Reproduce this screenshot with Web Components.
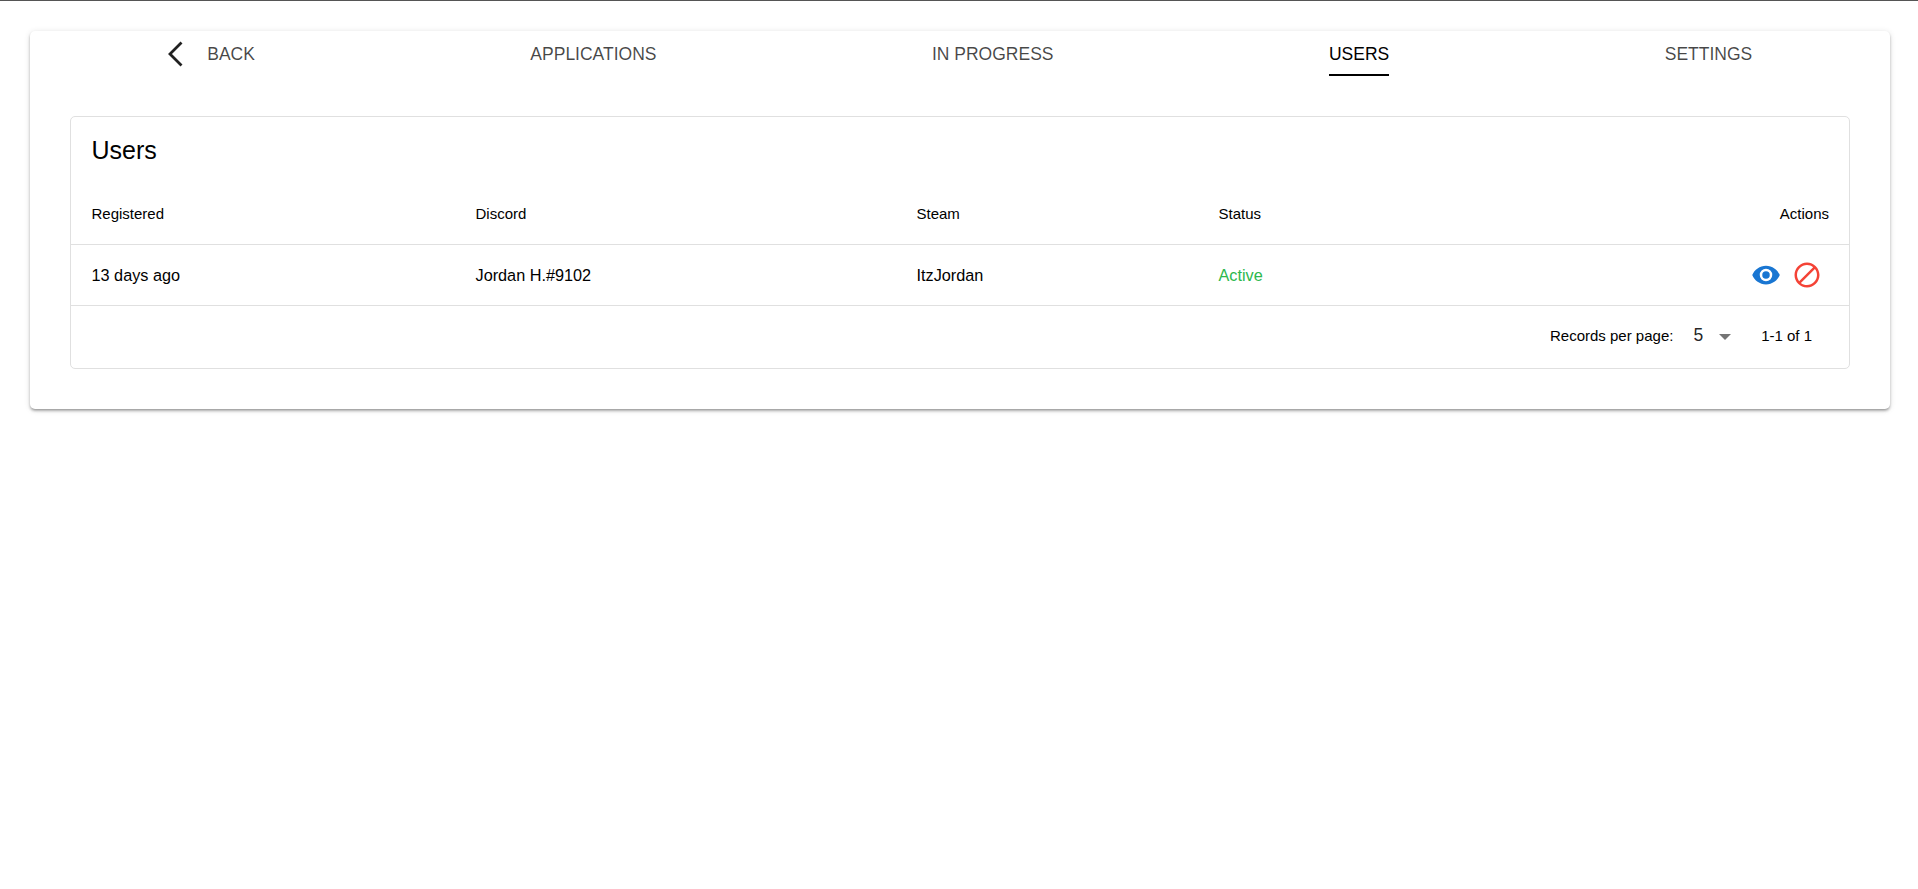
<!DOCTYPE html>
<html lang="en">
<head>
<meta charset="utf-8">
<title>Users</title>
<style>
    html, body { margin: 0; padding: 0; background: #fff; }
    body { font-family: "Liberation Sans", Arial, sans-serif; color: #000; border-top: 1px solid #555; }
</style>
</head>
<body>
<admin-page>
    <nav-tabs slot="tabs">
        <nav-tab back>BACK</nav-tab>
        <nav-tab>APPLICATIONS</nav-tab>
        <nav-tab>IN PROGRESS</nav-tab>
        <nav-tab active>USERS</nav-tab>
        <nav-tab>SETTINGS</nav-tab>
    </nav-tabs>
    <data-card title="Users">
        <table-row header>
            <span>Registered</span><span>Discord</span><span>Steam</span><span>Status</span><span class="end">Actions</span>
        </table-row>
        <table-row>
            <span>13 days ago</span><span>Jordan H.#9102</span><span>ItzJordan</span><span style="color:#2db84d">Active</span>
            <row-actions></row-actions>
        </table-row>
        <table-footer records="5" range="1-1 of 1"></table-footer>
    </data-card>
</admin-page>

<script>
class AdminPage extends HTMLElement {
    constructor() {
        super();
        this.attachShadow({ mode: 'open' });
        this.shadowRoot.innerHTML = `
            <style>
                :host { display: block; padding: 30px 28px 30px 30px; }
                .sheet {
                    background: #fff;
                    border-radius: 5px;
                    box-shadow: 0 2px 3px -1px rgba(0,0,0,.3), 0 2px 3px 0 rgba(0,0,0,.14), 0 1px 6px 0 rgba(0,0,0,.12);
                }
                .body { padding: 40px; }
            </style>
            <div class="sheet">
                <slot name="tabs"></slot>
                <div class="body"><slot></slot></div>
            </div>
        `;
    }
}

class NavTabs extends HTMLElement {
    constructor() {
        super();
        this.attachShadow({ mode: 'open' });
        this.shadowRoot.innerHTML = `
            <style>
                :host { display: flex; justify-content: space-around; height: 45px; padding-left: 1.5px; }
            </style>
            <slot></slot>
        `;
    }
}

class NavTab extends HTMLElement {
    constructor() {
        super();
        this.attachShadow({ mode: 'open' });
        // back tab gets the chevron in front of its label
        const chevron = this.hasAttribute('back') ? `
            <svg width="16" height="26" viewBox="0 0 16 26" fill="none" stroke="currentColor" stroke-width="2.8">
                <path d="M14.5 1.5 L3 13 L14.5 24.5"/>
            </svg>` : '';
        this.shadowRoot.innerHTML = `
            <style>
                :host {
                    display: flex;
                    align-items: center;
                    gap: 24px;
                    box-sizing: border-box;
                    padding-top: 3px;
                    border-bottom: 2px solid transparent;
                    font-size: 17.5px;
                    color: rgba(0,0,0,.72);
                    white-space: nowrap;
                }
                :host([active]) { color: #000; border-bottom-color: #000; }
                :host([back]) svg { color: rgba(0,0,0,.87); margin-left: -2px; }
            </style>
            ${chevron}<span><slot></slot></span>
        `;
    }
}

class DataCard extends HTMLElement {
    constructor() {
        super();
        this.attachShadow({ mode: 'open' });
        const title = this.getAttribute('title') || '';
        this.shadowRoot.innerHTML = `
            <style>
                :host {
                    display: block;
                    border: 1px solid #e0e0e0;
                    border-radius: 5px;
                }
                .title {
                    font-size: 25px;
                    line-height: 30px;
                    padding: 18px 21px 17px 20.5px;
                }
            </style>
            <div class="title">${title}</div>
            <slot></slot>
        `;
    }
}

class TableRow extends HTMLElement {
    constructor() {
        super();
        this.attachShadow({ mode: 'open' });
        this.shadowRoot.innerHTML = `
            <style>
                :host {
                    display: grid;
                    grid-template-columns: 384px 441px 302px 1fr;
                    grid-auto-flow: column;
                    align-items: center;
                    height: 60px;
                    padding: 0 20px 0 20.5px;
                    border-bottom: 1px solid #e0e0e0;
                    font-size: 16.25px;
                }
                :host([header]) { height: 62px; font-size: 15px; }
                ::slotted(.end) { justify-self: end; }
            </style>
            <slot></slot>
        `;
    }
}

class RowActions extends HTMLElement {
    constructor() {
        super();
        this.attachShadow({ mode: 'open' });
        this.shadowRoot.innerHTML = `
            <style>
                :host { display: flex; justify-self: end; gap: 11px; padding-right: 7px; }
                svg { display: block; width: 30px; height: 30px; }
                .ban { transform: scaleX(-1); }
            </style>
            <svg viewBox="0 0 24 24" fill="#1976d2">
                <path d="M12,9A3,3 0 0,0 9,12A3,3 0 0,0 12,15A3,3 0 0,0 15,12A3,3 0 0,0 12,9M12,17A5,5 0 0,1 7,12A5,5 0 0,1 12,7A5,5 0 0,1 17,12A5,5 0 0,1 12,17M12,4.5C7,4.5 2.73,7.61 1,12C2.73,16.39 7,19.5 12,19.5C17,19.5 21.27,16.39 23,12C21.27,7.61 17,4.5 12,4.5Z"/>
            </svg>
            <svg class="ban" viewBox="0 0 24 24" fill="#f44336">
                <path d="M12 2C17.5 2 22 6.5 22 12S17.5 22 12 22 2 17.5 2 12 6.5 2 12 2M12 4C10.1 4 8.4 4.6 7.1 5.7L18.3 16.9C19.3 15.5 20 13.8 20 12C20 7.6 16.4 4 12 4M16.9 18.3L5.7 7.1C4.6 8.4 4 10.1 4 12C4 16.4 7.6 20 12 20C13.9 20 15.6 19.4 16.9 18.3Z"/>
            </svg>
        `;
    }
}

class TableFooter extends HTMLElement {
    constructor() {
        super();
        this.attachShadow({ mode: 'open' });
        const records = this.getAttribute('records') || '5';
        const range = this.getAttribute('range') || '';
        this.shadowRoot.innerHTML = `
            <style>
                :host {
                    display: flex;
                    align-items: center;
                    justify-content: flex-end;
                    box-sizing: border-box;
                    height: 62px;
                    padding: 0 37px 3px 0;
                    font-size: 15px;
                }
                .label { margin-right: 20px; }
                .value { font-size: 17.5px; color: rgba(0,0,0,.87); margin-right: 16px; }
                .caret {
                    width: 0; height: 0;
                    border-left: 6.5px solid transparent;
                    border-right: 6.5px solid transparent;
                    border-top: 6.5px solid rgba(0,0,0,.54);
                    margin: 3px 30px 0 0;
                }
            </style>
            <span class="label">Records per page:</span>
            <span class="value">${records}</span>
            <span class="caret"></span>
            <span>${range}</span>
        `;
    }
}

// Register the custom elements
customElements.define('admin-page', AdminPage);
customElements.define('nav-tabs', NavTabs);
customElements.define('nav-tab', NavTab);
customElements.define('data-card', DataCard);
customElements.define('table-row', TableRow);
customElements.define('row-actions', RowActions);
customElements.define('table-footer', TableFooter);
</script>
</body>
</html>
